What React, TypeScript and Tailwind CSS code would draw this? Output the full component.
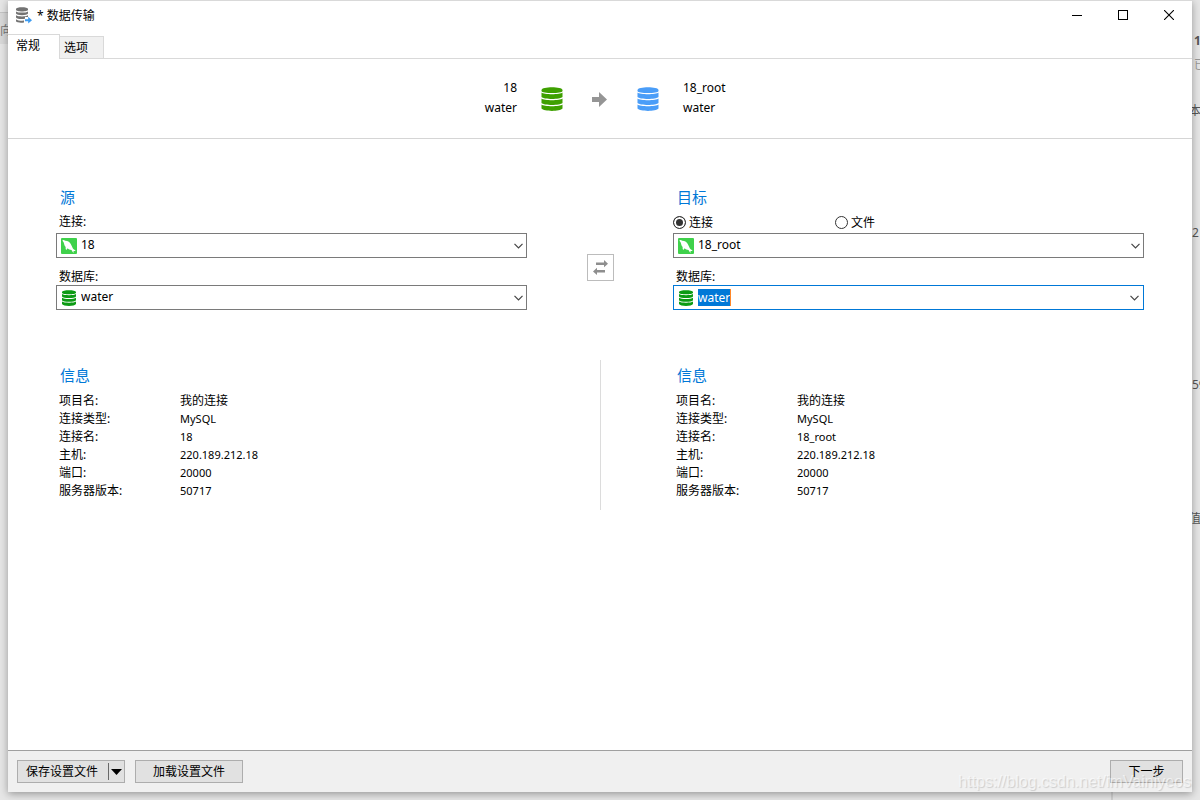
import React, { useEffect, useRef } from 'react';
import clsx from 'clsx';

const sans = "font-['Noto_Sans','Noto_Sans_CJK_SC',sans-serif]";

interface DatabaseIconProps {
  className?: string;
}

const DatabaseIcon: React.FC<DatabaseIconProps> = ({ className }) => (
  <svg viewBox="0 0 22 24" className={className} fill="currentColor" aria-hidden="true">
    <path d="M.5 3C.5-.8 21.500-.8 21.500 3V4C21.500 6.800 .5 6.800 .5 4Z" />
    <path d="M.5 5.600C3 7.800 19 7.800 21.500 5.600V10C19 12.600 3 12.600 .5 10Z" />
    <path d="M.5 11.600C3 13.800 19 13.800 21.500 11.600V16C19 18.600 3 18.600 .5 16Z" />
    <path d="M.5 17.600C3 19.800 19 19.800 21.500 17.600V21.500C19 24.700 3 24.700 .5 21.500Z" />
  </svg>
);

const SmallDatabaseIcon = () => (
  <svg viewBox="0 0 16 16" className="h-4 w-4" fill="#0c9b14" aria-hidden="true">
    <path d="M1 2C1-.5 15-.5 15 2V2.700C15 4.800 1 4.800 1 2.700Z" />
    <path d="M1 4C3 5.600 13 5.600 15 4V6.400C14 8.500 2 8.500 1 6.400Z" />
    <path d="M1 7.800C3 9.400 13 9.400 15 7.800V10.200C14 12.300 2 12.300 1 10.200Z" />
    <path d="M1 11.600C3 13.200 13 13.200 15 11.600V14C14 16.600 2 16.600 1 14Z" />
  </svg>
);

const TransferIcon = () => (
  <svg viewBox="0 0 16 17" className="h-[17px] w-4" aria-hidden="true">
    <g fill="#737373">
      <path d="M0 2C0-.4 12-.4 12 2V2.800C12 5 0 5 0 2.800Z" />
      <path d="M0 4.400C2 6 10 6 12 4.400V6.600C11 8.700 1 8.700 0 6.600Z" />
      <path d="M0 8.300C2 9.900 10 9.900 12 8.300V10H9V11.800C6 12.400 1 12.200 0 10.600Z" />
      <path d="M0 12.200C1.500 13.500 5 13.800 8 13.600V15.500C5 16 1 15.800 0 14.300Z" />
    </g>
    <path d="M9 12.200H12.200V9.800L16 13.200L12.200 16.600V14.200H9Z" fill="#3d9bf0" />
  </svg>
);

const MySqlIcon = () => (
  <svg viewBox="0 0 16 16" className="h-4 w-4" aria-hidden="true">
    <rect width="16" height="16" rx="1" fill="#3fd14b" />
    <path
      d="M1.600 2C2.700 1.700 3.500 2.100 4.200 2.800C6.500 2.700 8.500 4 9.600 5.700C10.500 7.100 11 8.900 11.900 10.500C12.800 11.500 14.100 12 14.600 12.900L12.600 13L12.400 15C11.500 14.100 11.200 13 10.500 12.100C8.900 12 7.600 11.200 6.700 10.300L5.300 12C4.500 11 4.500 9.900 4.700 8.900C3.200 7.600 3.300 5.700 2.600 4.200C2.100 3.500 1.400 2.800 1.600 2Z"
      fill="#fff"
    />
  </svg>
);

const Chevron = () => (
  <svg viewBox="0 0 9 6" className="h-[6px] w-[9px]" fill="none" stroke="#444" strokeWidth="1.200" aria-hidden="true">
    <path d="M.5 .8L4.500 4.800L8.500 .8" />
  </svg>
);

interface SelectBoxProps {
  id: string;
  value: string;
  icon: React.ReactNode;
}

const SelectBox: React.FC<SelectBoxProps> = ({ id, value, icon }) => (
  <div className="relative">
    <span className="pointer-events-none absolute inset-y-0 left-[5px] flex items-center">{icon}</span>
    <select
      id={id}
      defaultValue={value}
      className="block h-[25px] w-full appearance-none border border-[#7a7a7a] bg-white pb-[2px] pl-6 pr-6 text-xs outline-none"
    >
      <option>{value}</option>
    </select>
    <span className="pointer-events-none absolute inset-y-0 right-1 flex items-center">
      <Chevron />
    </span>
  </div>
);

interface ComboBoxProps {
  id: string;
  value: string;
}

const ComboBox: React.FC<ComboBoxProps> = ({ id, value }) => {
  const inputRef = useRef<HTMLInputElement>(null);

  useEffect(() => {
    inputRef.current?.focus();
    inputRef.current?.select();
  }, []);

  return (
    <div className="flex h-[25px] items-center gap-1 border border-[#0078d7] bg-white px-1">
      <SmallDatabaseIcon />
      <div className="flex pb-px">
        <input
          ref={inputRef}
          id={id}
          defaultValue={value}
          className="field-sizing-content h-[17px] text-xs leading-[17px] outline-none selection:bg-[#0078d7] selection:text-white"
        />
        <span className="h-[17px] w-px bg-[#ff8728]" />
      </div>
      <button type="button" aria-label="展开" className="ml-auto">
        <Chevron />
      </button>
    </div>
  );
};

interface FieldLabelProps {
  htmlFor: string;
  className?: string;
  children: React.ReactNode;
}

const FieldLabel: React.FC<FieldLabelProps> = ({ htmlFor, className, children }) => (
  <label htmlFor={htmlFor} className={clsx('block pl-[3px] text-xs leading-4', className)}>
    {children}
  </label>
);

interface RadioProps {
  label: string;
  checked?: boolean;
}

const Radio: React.FC<RadioProps> = ({ label, checked = false }) => (
  <label className="flex w-[162px] items-center gap-[3px] text-xs leading-5">
    <input
      type="radio"
      name="target"
      defaultChecked={checked}
      className="h-[13px] w-[13px] appearance-none rounded-full border border-[#333] bg-white checked:bg-[#333] checked:shadow-[inset_0_0_0_2px_#fff]"
    />
    <span className="pt-px">{label}</span>
  </label>
);

interface InfoProps {
  name: string;
}

const Info: React.FC<InfoProps> = ({ name }) => {
  const rows = [
    ['项目名:', '我的连接'],
    ['连接类型:', 'MySQL'],
    ['连接名:', name],
    ['主机:', '220.189.212.18'],
    ['端口:', '20000'],
    ['服务器版本:', '50717'],
  ];

  return (
    <section>
      <h2 className="pl-1 text-[15px] leading-[30px] text-[#0078d7]">信息</h2>
      <dl className="mt-[2px] grid grid-cols-[121px_1fr] pl-[3px]">
        {rows.map(([label, value]) => (
          <React.Fragment key={label}>
            <dt className="text-xs leading-[18px]">{label}</dt>
            <dd className={clsx('leading-[18px]', value === '我的连接' ? 'text-xs leading-[18px]' : 'text-[11px]')}>
              {value}
            </dd>
          </React.Fragment>
        ))}
      </dl>
    </section>
  );
};

const TitleBar = () => (
  <header className="flex h-[33px] items-start pl-2">
    <div className="flex h-7 items-center gap-[5px] text-xs">
      <TransferIcon />
      <h1 className="pt-[2px]">* 数据传输</h1>
    </div>
    <div className="ml-auto flex h-7">
      <button type="button" aria-label="最小化" className="flex w-[46px] items-center justify-center">
        <span className="h-px w-[10px] bg-black" />
      </button>
      <button type="button" aria-label="最大化" className="flex w-[46px] items-center justify-center">
        <span className="h-[10px] w-[10px] border border-black" />
      </button>
      <button type="button" aria-label="关闭" className="flex w-[46px] items-center justify-center">
        <svg viewBox="0 0 10 10" className="h-[10px] w-[10px]" stroke="#000" strokeWidth="1.100">
          <path d="M0 0L10 10M10 0L0 10" />
        </svg>
      </button>
    </div>
  </header>
);

const Tabs = () => (
  <div role="tablist" className="flex h-[25px] items-end border-b border-[#d9d9d9] text-xs">
    <button
      type="button"
      role="tab"
      aria-selected="true"
      className="-mb-px h-[25px] w-[52px] border-r border-t border-[#d9d9d9] bg-white pb-[2px] pl-2 text-left"
    >
      常规
    </button>
    <button
      type="button"
      role="tab"
      aria-selected="false"
      className="h-[22px] w-11 border-r border-t border-[#d9d9d9] bg-[#f0f0f0] pl-1 text-left"
    >
      选项
    </button>
  </div>
);

const Summary = () => (
  <div className="grid h-20 grid-cols-[1fr_74px_1fr] items-center border-b border-[#d5d5d5] text-xs leading-5">
    <div className="flex items-center justify-end gap-6">
      <p className="pb-[2px] text-right">
        18
        <br />
        water
      </p>
      <DatabaseIcon className="h-6 w-[22px] text-[#3ea000]" />
    </div>
    <svg viewBox="0 0 16 16" className="h-4 w-4 justify-self-center" fill="#959595" aria-hidden="true">
      <path d="M0 6H7V1L15 8.500L7 16V11H0Z" />
    </svg>
    <div className="flex items-center gap-6">
      <DatabaseIcon className="h-6 w-[22px] text-[#4a9df8]" />
      <p className="pb-[2px]">
        18_root
        <br />
        water
      </p>
    </div>
  </div>
);

const Source = () => (
  <section>
    <h2 className="pl-1 text-[15px] leading-5 text-[#0078d7]">源</h2>
    <FieldLabel htmlFor="source-connection" className="mb-[3px] mt-[7px]">
      连接:
    </FieldLabel>
    <SelectBox id="source-connection" value="18" icon={<MySqlIcon />} />
    <FieldLabel htmlFor="source-database" className="mt-[11px]">
      数据库:
    </FieldLabel>
    <SelectBox id="source-database" value="water" icon={<SmallDatabaseIcon />} />
  </section>
);

const Target = () => (
  <section>
    <h2 className="pl-1 text-[15px] leading-5 text-[#0078d7]">目标</h2>
    <div className="mt-[5px] flex h-[21px]">
      <Radio label="连接" checked />
      <Radio label="文件" />
    </div>
    <SelectBox id="target-connection" value="18_root" icon={<MySqlIcon />} />
    <FieldLabel htmlFor="target-database" className="mt-[11px]">
      数据库:
    </FieldLabel>
    <ComboBox id="target-database" value="water" />
  </section>
);

const SwapButton = () => (
  <button
    type="button"
    aria-label="交换"
    className="mt-[67px] flex h-[27px] w-[27px] items-center justify-center justify-self-center border border-[#bcbcbc] bg-white"
  >
    <svg viewBox="0 0 15 15" className="h-[15px] w-[15px]" fill="#8e8e8e">
      <path d="M3 2.500H11V0L15 3.700L11 7.300V5H3Z" />
      <path d="M12 10H4V7.700L0 11.400L4 15V12.500H12Z" />
    </svg>
  </button>
);

const Footer = () => (
  <footer className="flex h-[42px] items-center gap-[10px] border-t border-[#a0a0a0] bg-[#f0f0f0] px-[9px] text-xs">
    <button type="button" className="flex h-[23px] w-[108px] items-center border border-[#adadad] bg-[#e1e1e1] pl-2">
      保存设置文件
      <span className="ml-auto h-[17px] w-px bg-[#696969]" />
      <svg viewBox="0 0 11 6" className="ml-[2px] mr-[2px] h-[6px] w-[11px]">
        <path d="M0 0H11L5.500 6Z" />
      </svg>
    </button>
    <button type="button" className="h-[23px] w-[108px] border border-[#adadad] bg-[#e1e1e1]">
      加载设置文件
    </button>
    <button type="button" className="ml-auto h-[23px] w-[73px] border border-[#adadad] bg-[#e1e1e1]">
      下一步
    </button>
  </footer>
);

// Slivers of the application behind the dialog.
const Backdrop = () => (
  <div className="absolute inset-0 overflow-hidden bg-[#e6e6e6] text-xs leading-4 text-[#555]" aria-hidden="true">
    <div className="absolute left-0 top-3 h-8 w-2 border-t border-[#c4c4c4] bg-[#d9d9d9]" />
    <span className="absolute left-0 top-[23px] text-[#777]">向</span>
    <span className="absolute left-[1194px] top-[33px] font-bold">1</span>
    <span className="absolute left-[1194px] top-[57px] text-[#999]">已</span>
    <span className="absolute left-[1189px] top-[103px]">本</span>
    <span className="absolute left-[1192px] top-[225px]">2</span>
    <span className="absolute left-[1192px] top-[377px]">59</span>
    <span className="absolute left-[1189px] top-[511px]">值</span>
    <div className="absolute bottom-0 left-[1111px] h-2 w-[2px] bg-[#d0d0d0]" />
  </div>
);

export default function App() {
  return (
    <div className={clsx('relative flex min-h-screen flex-col px-2 pb-2 text-black', sans)}>
      <Backdrop />
      <main className="relative flex flex-1 flex-col border-t border-[#d9d9d9] bg-white shadow-[0_2px_8px_rgba(0,0,0,0.35)]">
        <TitleBar />
        <Tabs />
        <Summary />
        <div className="flex-1 px-12 pt-12">
          <div className="grid grid-cols-[1fr_146px_1fr]">
            <Source />
            <SwapButton />
            <Target />
          </div>
          <div className="mt-[50px] grid grid-cols-[1fr_146px_1fr]">
            <Info name="18" />
            <div className="h-[150px] w-px justify-self-center bg-[#dcdcdc]" />
            <Info name="18_root" />
          </div>
        </div>
        <Footer />
      </main>
      <span className="pointer-events-none absolute bottom-2 right-[9px] font-['Liberation_Sans',sans-serif] text-base leading-5 text-white/60 [text-shadow:1px_1px_1px_rgba(0,0,0,0.15)]">
        https://blog.csdn.net/imVainiyeos
      </span>
    </div>
  );
}
